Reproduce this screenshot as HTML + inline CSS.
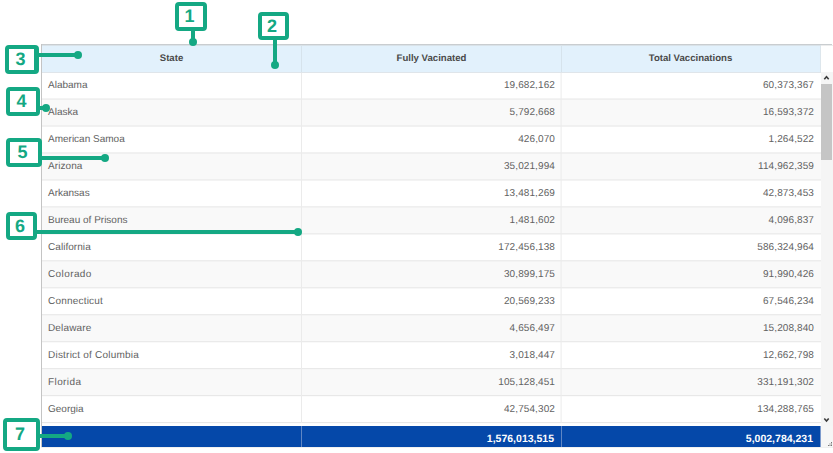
<!DOCTYPE html>
<html><head><meta charset="utf-8"><title>Table</title>
<style>
html,body{margin:0;padding:0;background:#fff;}
body{width:833px;height:453px;position:relative;overflow:hidden;font-family:"Liberation Sans",sans-serif;text-rendering:geometricPrecision;}
.abs{position:absolute;}
.hdr{position:absolute;top:45px;height:27px;line-height:28px;background:#e2f1fc;color:#4a4a4a;font-weight:bold;font-size:9.6px;text-align:center;white-space:nowrap;}
.row{position:absolute;left:42px;width:779px;height:26px;}
.row.alt{background:#f8f8f8;}
.c{position:absolute;top:0;height:26px;line-height:25px;font-size:10px;color:#626262;white-space:nowrap;}
.c1{left:6px;}
.c2{right:266px;text-align:right;letter-spacing:0.1px;}
.c3{right:7px;text-align:right;letter-spacing:0.1px;}
.vl{position:absolute;width:1px;background:#e4e4e4;}
.box{position:absolute;box-sizing:border-box;border:4px solid #14a883;border-radius:4px;background:#fff;color:#14a883;font-weight:bold;font-size:18px;text-align:center;padding-right:3px;}
.ln{position:absolute;background:#14a883;}
.dot{position:absolute;width:8px;height:8px;border-radius:50%;background:#14a883;}
.ft{position:absolute;top:426px;height:21px;line-height:26px;overflow:hidden;background:#0548a9;color:#fff;font-weight:bold;font-size:10.5px;text-align:right;white-space:nowrap;}
</style></head><body>

<div class="abs" style="left:41px;top:44px;width:791px;height:1px;background:#c9cdd0"></div>
<div class="abs" style="left:42px;top:72px;width:779px;height:1px;background:#dfe5ea"></div>
<div class="abs" style="left:41px;top:44px;width:1px;height:403px;background:#c4c4c4"></div>
<div class="hdr" style="left:42px;width:259px;">State</div>
<div class="hdr" style="left:302px;width:259px;">Fully Vacinated</div>
<div class="hdr" style="left:562px;width:257px;padding-right:2px">Total Vaccinations</div>
<div class="abs" style="left:301px;top:45px;width:1px;height:27px;background:#d6e3ec"></div>
<div class="abs" style="left:561px;top:45px;width:1px;height:27px;background:#d6e3ec"></div>
<div class="abs" style="left:820px;top:45px;width:1px;height:27px;background:#dde6ec"></div>
<div class="abs" style="left:42px;top:45px;width:779px;height:1px;background:#d9e2e8"></div>
<div class="abs" style="left:821px;top:45px;width:12px;height:1px;background:#ececec"></div>
<svg class="abs" style="left:42px;top:72px" width="779" height="354" viewBox="42 72 779 354"><rect x="42" y="99.55" width="779" height="25.97" fill="#f9f9f9"/><rect x="42" y="153.48" width="779" height="25.97" fill="#f9f9f9"/><rect x="42" y="207.41" width="779" height="25.97" fill="#f9f9f9"/><rect x="42" y="261.34" width="779" height="25.97" fill="#f9f9f9"/><rect x="42" y="315.27" width="779" height="25.97" fill="#f9f9f9"/><rect x="42" y="369.20" width="779" height="25.97" fill="#f9f9f9"/><rect x="42" y="98.55" width="779" height="1" fill="#e4e4e4"/><rect x="42" y="125.52" width="779" height="1" fill="#e4e4e4"/><rect x="42" y="152.48" width="779" height="1" fill="#e4e4e4"/><rect x="42" y="179.44" width="779" height="1" fill="#e4e4e4"/><rect x="42" y="206.41" width="779" height="1" fill="#e4e4e4"/><rect x="42" y="233.38" width="779" height="1" fill="#e4e4e4"/><rect x="42" y="260.34" width="779" height="1" fill="#e4e4e4"/><rect x="42" y="287.31" width="779" height="1" fill="#e4e4e4"/><rect x="42" y="314.27" width="779" height="1" fill="#e4e4e4"/><rect x="42" y="341.24" width="779" height="1" fill="#e4e4e4"/><rect x="42" y="368.20" width="779" height="1" fill="#e4e4e4"/><rect x="42" y="395.17" width="779" height="1" fill="#e4e4e4"/><rect x="42" y="422.13" width="779" height="1" fill="#e4e4e4"/><rect x="301" y="73" width="1" height="350" fill="#ebebeb"/><rect x="560.6" y="73" width="1" height="350" fill="#ebebeb"/></svg>
<div class="row" style="top:73px"><span class="c c1">Alabama</span><span class="c c2">19,682,162</span><span class="c c3">60,373,367</span></div>
<div class="row" style="top:100px"><span class="c c1">Alaska</span><span class="c c2">5,792,668</span><span class="c c3">16,593,372</span></div>
<div class="row" style="top:127px"><span class="c c1">American Samoa</span><span class="c c2">426,070</span><span class="c c3">1,264,522</span></div>
<div class="row" style="top:154px"><span class="c c1" style="letter-spacing:0.08px">Arizona</span><span class="c c2">35,021,994</span><span class="c c3">114,962,359</span></div>
<div class="row" style="top:181px"><span class="c c1">Arkansas</span><span class="c c2">13,481,269</span><span class="c c3">42,873,453</span></div>
<div class="row" style="top:208px"><span class="c c1">Bureau of Prisons</span><span class="c c2">1,481,602</span><span class="c c3">4,096,837</span></div>
<div class="row" style="top:235px"><span class="c c1" style="letter-spacing:0.05px">California</span><span class="c c2">172,456,138</span><span class="c c3">586,324,964</span></div>
<div class="row" style="top:262px"><span class="c c1" style="letter-spacing:0.4px">Colorado</span><span class="c c2">30,899,175</span><span class="c c3">91,990,426</span></div>
<div class="row" style="top:289px"><span class="c c1" style="letter-spacing:0.2px">Connecticut</span><span class="c c2">20,569,233</span><span class="c c3">67,546,234</span></div>
<div class="row" style="top:316px"><span class="c c1" style="letter-spacing:0.15px">Delaware</span><span class="c c2">4,656,497</span><span class="c c3">15,208,840</span></div>
<div class="row" style="top:343px"><span class="c c1" style="letter-spacing:0.22px">District of Columbia</span><span class="c c2">3,018,447</span><span class="c c3">12,662,798</span></div>
<div class="row" style="top:370px"><span class="c c1" style="letter-spacing:0.4px">Florida</span><span class="c c2">105,128,451</span><span class="c c3">331,191,302</span></div>
<div class="row" style="top:397px"><span class="c c1">Georgia</span><span class="c c2">42,754,302</span><span class="c c3">134,288,765</span></div>
<div class="abs" style="left:821px;top:72px;width:12px;height:354px;background:#f5f5f5"></div>
<div class="abs" style="left:821px;top:84px;width:11px;height:76px;background:#c5c5c5"></div>
<svg class="abs" style="left:821px;top:72px" width="12" height="12" viewBox="0 0 12 12"><path d="M3.3 7.3 L5.5 4.8 L7.7 7.3" fill="none" stroke="#3c3c3c" stroke-width="1.6"/></svg>
<svg class="abs" style="left:821px;top:414px" width="12" height="12" viewBox="0 0 12 12"><path d="M3.3 4.5 L5.5 7 L7.7 4.5" fill="none" stroke="#3c3c3c" stroke-width="1.6"/></svg>
<div class="abs" style="left:821px;top:426px;width:12px;height:21px;background:#f6f6f6"></div>
<div class="abs" style="left:41px;top:447px;width:792px;height:1px;background:#f0f0f0"></div>
<svg class="abs" style="left:827px;top:441px" width="6" height="6" viewBox="0 0 6 6"><g fill="#777"><rect x="4" y="1" width="1" height="1"/><rect x="2.5" y="2.5" width="1" height="1"/><rect x="4" y="2.5" width="1" height="1"/><rect x="1" y="4" width="1" height="1"/><rect x="2.5" y="4" width="1" height="1"/><rect x="4" y="4" width="1" height="1"/></g></svg>
<div class="ft" style="left:42px;width:259px;"></div>
<div class="ft" style="left:302px;width:259px;"><span style="padding-right:7px">1,576,013,515</span></div>
<div class="ft" style="left:562px;width:259px;"><span style="padding-right:8px">5,002,784,231</span></div>
<div class="abs" style="left:301px;top:426px;width:1px;height:21px;background:#5f86c4"></div>
<div class="abs" style="left:561px;top:426px;width:1px;height:21px;background:#5f86c4"></div>
<div class="abs" style="left:820px;top:426px;width:1px;height:21px;background:#7d9bcd"></div>
<div class="ln" style="left:191px;top:30px;width:4px;height:12px"></div>
<div class="dot" style="left:189px;top:38px;width:8px;height:8px"></div>
<div class="box" style="left:175px;top:2px;width:32px;height:29px;line-height:21px">1</div>
<div class="ln" style="left:273px;top:39px;width:4px;height:26px"></div>
<div class="dot" style="left:271px;top:61px;width:8px;height:8px"></div>
<div class="box" style="left:258px;top:12px;width:31px;height:28px;line-height:20px">2</div>
<div class="ln" style="left:38px;top:53px;width:40px;height:4px"></div>
<div class="dot" style="left:74px;top:51px;width:8px;height:8px"></div>
<div class="box" style="left:5px;top:45px;width:34px;height:29px;border-right-width:5px;padding-right:2px;line-height:21px">3</div>
<div class="ln" style="left:39px;top:106px;width:7px;height:4px"></div>
<div class="dot" style="left:42px;top:104px;width:8px;height:8px"></div>
<div class="box" style="left:6px;top:87px;width:34px;height:29px;line-height:21px">4</div>
<div class="ln" style="left:41px;top:156px;width:64px;height:4px"></div>
<div class="dot" style="left:101px;top:154px;width:8px;height:8px"></div>
<div class="box" style="left:6px;top:138px;width:36px;height:29px;line-height:21px">5</div>
<div class="ln" style="left:36px;top:230px;width:262px;height:4px"></div>
<div class="dot" style="left:294px;top:228px;width:8px;height:8px"></div>
<div class="box" style="left:6px;top:212px;width:31px;height:28px;line-height:20px">6</div>
<div class="ln" style="left:39px;top:434px;width:29px;height:4px"></div>
<div class="dot" style="left:64px;top:432px;width:8px;height:8px"></div>
<div class="box" style="left:3px;top:418px;width:37px;height:33px;line-height:25px">7</div>
</body></html>
